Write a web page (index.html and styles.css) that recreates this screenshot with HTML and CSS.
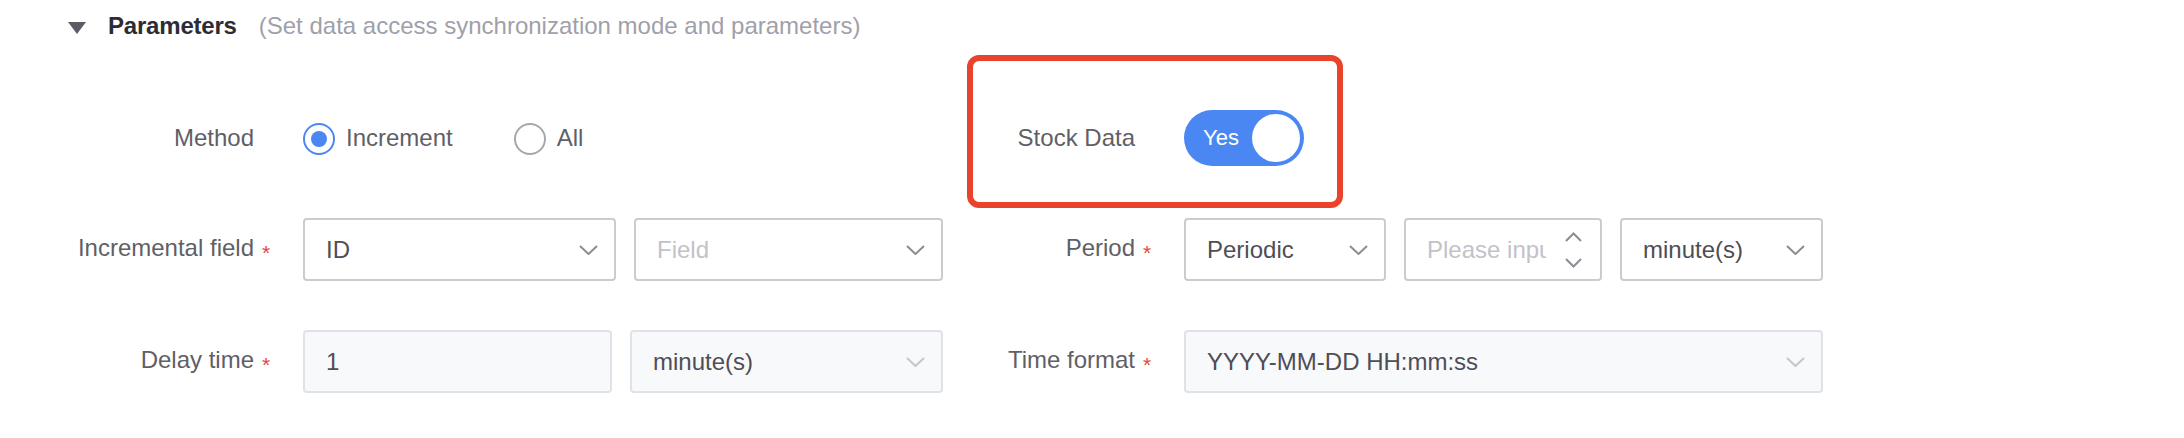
FILE: index.html
```html
<!DOCTYPE html>
<html>
<head>
<meta charset="utf-8">
<link rel="stylesheet" href="styles.css">
</head>
<body>
<div class="page">
  <div class="section-head">
    <span class="caret"></span>
    <span class="section-title">Parameters</span>
    <span class="section-sub">(Set data access synchronization mode and parameters)</span>
  </div>

  <div class="form-row row-first">
    <div class="label">Method<span class="req"></span></div>
    <div class="controls">
      <label class="radio checked"><span class="radio-dot"></span><span class="radio-text">Increment</span></label>
      <label class="radio"><span class="radio-dot"></span><span class="radio-text">All</span></label>
    </div>
    <div class="label">Stock Data<span class="req"></span></div>
    <div class="controls">
      <div class="switch on"><span class="switch-text">Yes</span><span class="switch-knob"></span></div>
    </div>
    <div class="highlight"></div>
  </div>

  <div class="form-row">
    <div class="label">Incremental field<span class="req">*</span></div>
    <div class="controls">
      <div class="select w313"><span class="value">ID</span><svg class="chev" viewBox="0 0 19 10"><polyline points="1,1 9.5,9 18,1"/></svg></div>
      <div class="select w309"><span class="value placeholder">Field</span><svg class="chev" viewBox="0 0 19 10"><polyline points="1,1 9.5,9 18,1"/></svg></div>
    </div>
    <div class="label">Period<span class="req">*</span></div>
    <div class="controls">
      <div class="select w202"><span class="value">Periodic</span><svg class="chev" viewBox="0 0 19 10"><polyline points="1,1 9.5,9 18,1"/></svg></div>
      <div class="number w198">
        <span class="value placeholder">Please input</span>
        <span class="spin">
          <svg class="spin-arrow" viewBox="0 0 17 10"><polyline points="1,9 8.5,1.5 16,9"/></svg>
          <svg class="spin-arrow" viewBox="0 0 17 10"><polyline points="1,1 8.5,8.5 16,1"/></svg>
        </span>
      </div>
      <div class="select w203"><span class="value">minute(s)</span><svg class="chev" viewBox="0 0 19 10"><polyline points="1,1 9.5,9 18,1"/></svg></div>
    </div>
  </div>

  <div class="form-row">
    <div class="label">Delay time<span class="req">*</span></div>
    <div class="controls">
      <div class="input disabled w309"><span class="value">1</span></div>
      <div class="select disabled w313"><span class="value">minute(s)</span><svg class="chev" viewBox="0 0 19 10"><polyline points="1,1 9.5,9 18,1"/></svg></div>
    </div>
    <div class="label">Time format<span class="req">*</span></div>
    <div class="controls">
      <div class="select disabled w639"><span class="value">YYYY-MM-DD HH:mm:ss</span><svg class="chev" viewBox="0 0 19 10"><polyline points="1,1 9.5,9 18,1"/></svg></div>
    </div>
  </div>
</div>
</body>
</html>
```

FILE: styles.css
```css
* { box-sizing: border-box; }

html, body {
  margin: 0;
  padding: 0;
  background: #ffffff;
}

body {
  font-family: "Liberation Sans", Arial, Helvetica, sans-serif;
  font-size: 24px;
  color: #5f5f67;
}

.page {
  width: 2184px;
  height: 438px;
  padding-top: 8px;
}

.section-head {
  display: flex;
  align-items: center;
  padding-left: 68px;
  line-height: 36px;
  height: 36px;
}

.caret {
  width: 0;
  height: 0;
  border-left: 9.5px solid transparent;
  border-right: 9.5px solid transparent;
  border-top: 12px solid #5c5c64;
  margin-top: 4px;
  margin-right: 22px;
}

.section-title {
  font-weight: bold;
  color: #2c2c34;
  letter-spacing: -0.2px;
}

.section-sub {
  margin-left: 22px;
  color: #a0a0aa;
}

.form-row {
  display: grid;
  grid-template-columns: 303px 640px 241px 640px;
  align-items: center;
  height: 63px;
  margin-top: 49px;
  position: relative;
}

.form-row.row-first {
  margin-top: 62px;
}

.label {
  text-align: right;
  padding-right: 34px;
  white-space: nowrap;
  color: #5f5f67;
}

.req {
  display: inline-block;
  width: 15px;
  padding-left: 8px;
  text-align: left;
  color: #e5463a;
  font-size: 21px;
  vertical-align: -4px;
}

.controls {
  display: flex;
  align-items: center;
  height: 63px;
}

/* radios */
.radio {
  display: flex;
  align-items: center;
  margin-right: 61px;
  color: #5f5f67;
}

.radio-dot {
  width: 32px;
  height: 32px;
  border-radius: 50%;
  border: 2px solid #a6a6ae;
  margin-right: 11px;
  display: flex;
  align-items: center;
  justify-content: center;
  margin-top: 2px;
}

.radio.checked .radio-dot {
  border-color: #4a87f2;
}

.radio.checked .radio-dot::after {
  content: "";
  width: 16px;
  height: 16px;
  border-radius: 50%;
  background: #4a87f2;
}

/* switch */
.switch {
  width: 120px;
  height: 56px;
  border-radius: 28px;
  background: #4a87f2;
  display: flex;
  align-items: center;
  padding: 0 4px 0 19px;
  justify-content: space-between;
}

.switch-text {
  color: #ffffff;
  font-size: 22px;
}

.switch-knob {
  width: 48px;
  height: 48px;
  border-radius: 50%;
  background: #ffffff;
}

.highlight {
  position: absolute;
  left: 967px;
  top: -51px;
  width: 376px;
  height: 153px;
  border: 6px solid #e9432b;
  border-radius: 12px;
  pointer-events: none;
}

/* inputs */
.select, .input, .number {
  height: 63px;
  border: 2px solid #cbcbd1;
  border-radius: 4px;
  display: flex;
  align-items: center;
  padding-left: 21px;
  padding-right: 16px;
  background: #ffffff;
  margin-right: 18px;
  flex: none;
}

.controls > :last-child { margin-right: 0; }

.value {
  flex: 1;
  color: #4e4e56;
  white-space: nowrap;
  overflow: hidden;
}

.value.placeholder {
  color: #c2c2ca;
}

.chev {
  width: 19px;
  height: 10px;
  flex: none;
  fill: none;
  stroke: #8c8c94;
  stroke-width: 2;
}

.disabled {
  background: #f8f9fb;
  border-color: #e1e2e7;
}

.disabled .chev {
  stroke: #c5c6cc;
}

.number {
  padding-right: 18px;
}

.spin {
  display: flex;
  flex-direction: column;
  justify-content: space-between;
  margin-left: 19px;
  height: 36px;
  flex: none;
}

.spin-arrow {
  width: 17px;
  height: 10px;
  fill: none;
  stroke: #8c8c94;
  stroke-width: 2;
}

.w313 { width: 313px; }
.w309 { width: 309px; }
.w202 { width: 202px; }
.w198 { width: 198px; }
.w203 { width: 203px; }
.w639 { width: 639px; }
```
